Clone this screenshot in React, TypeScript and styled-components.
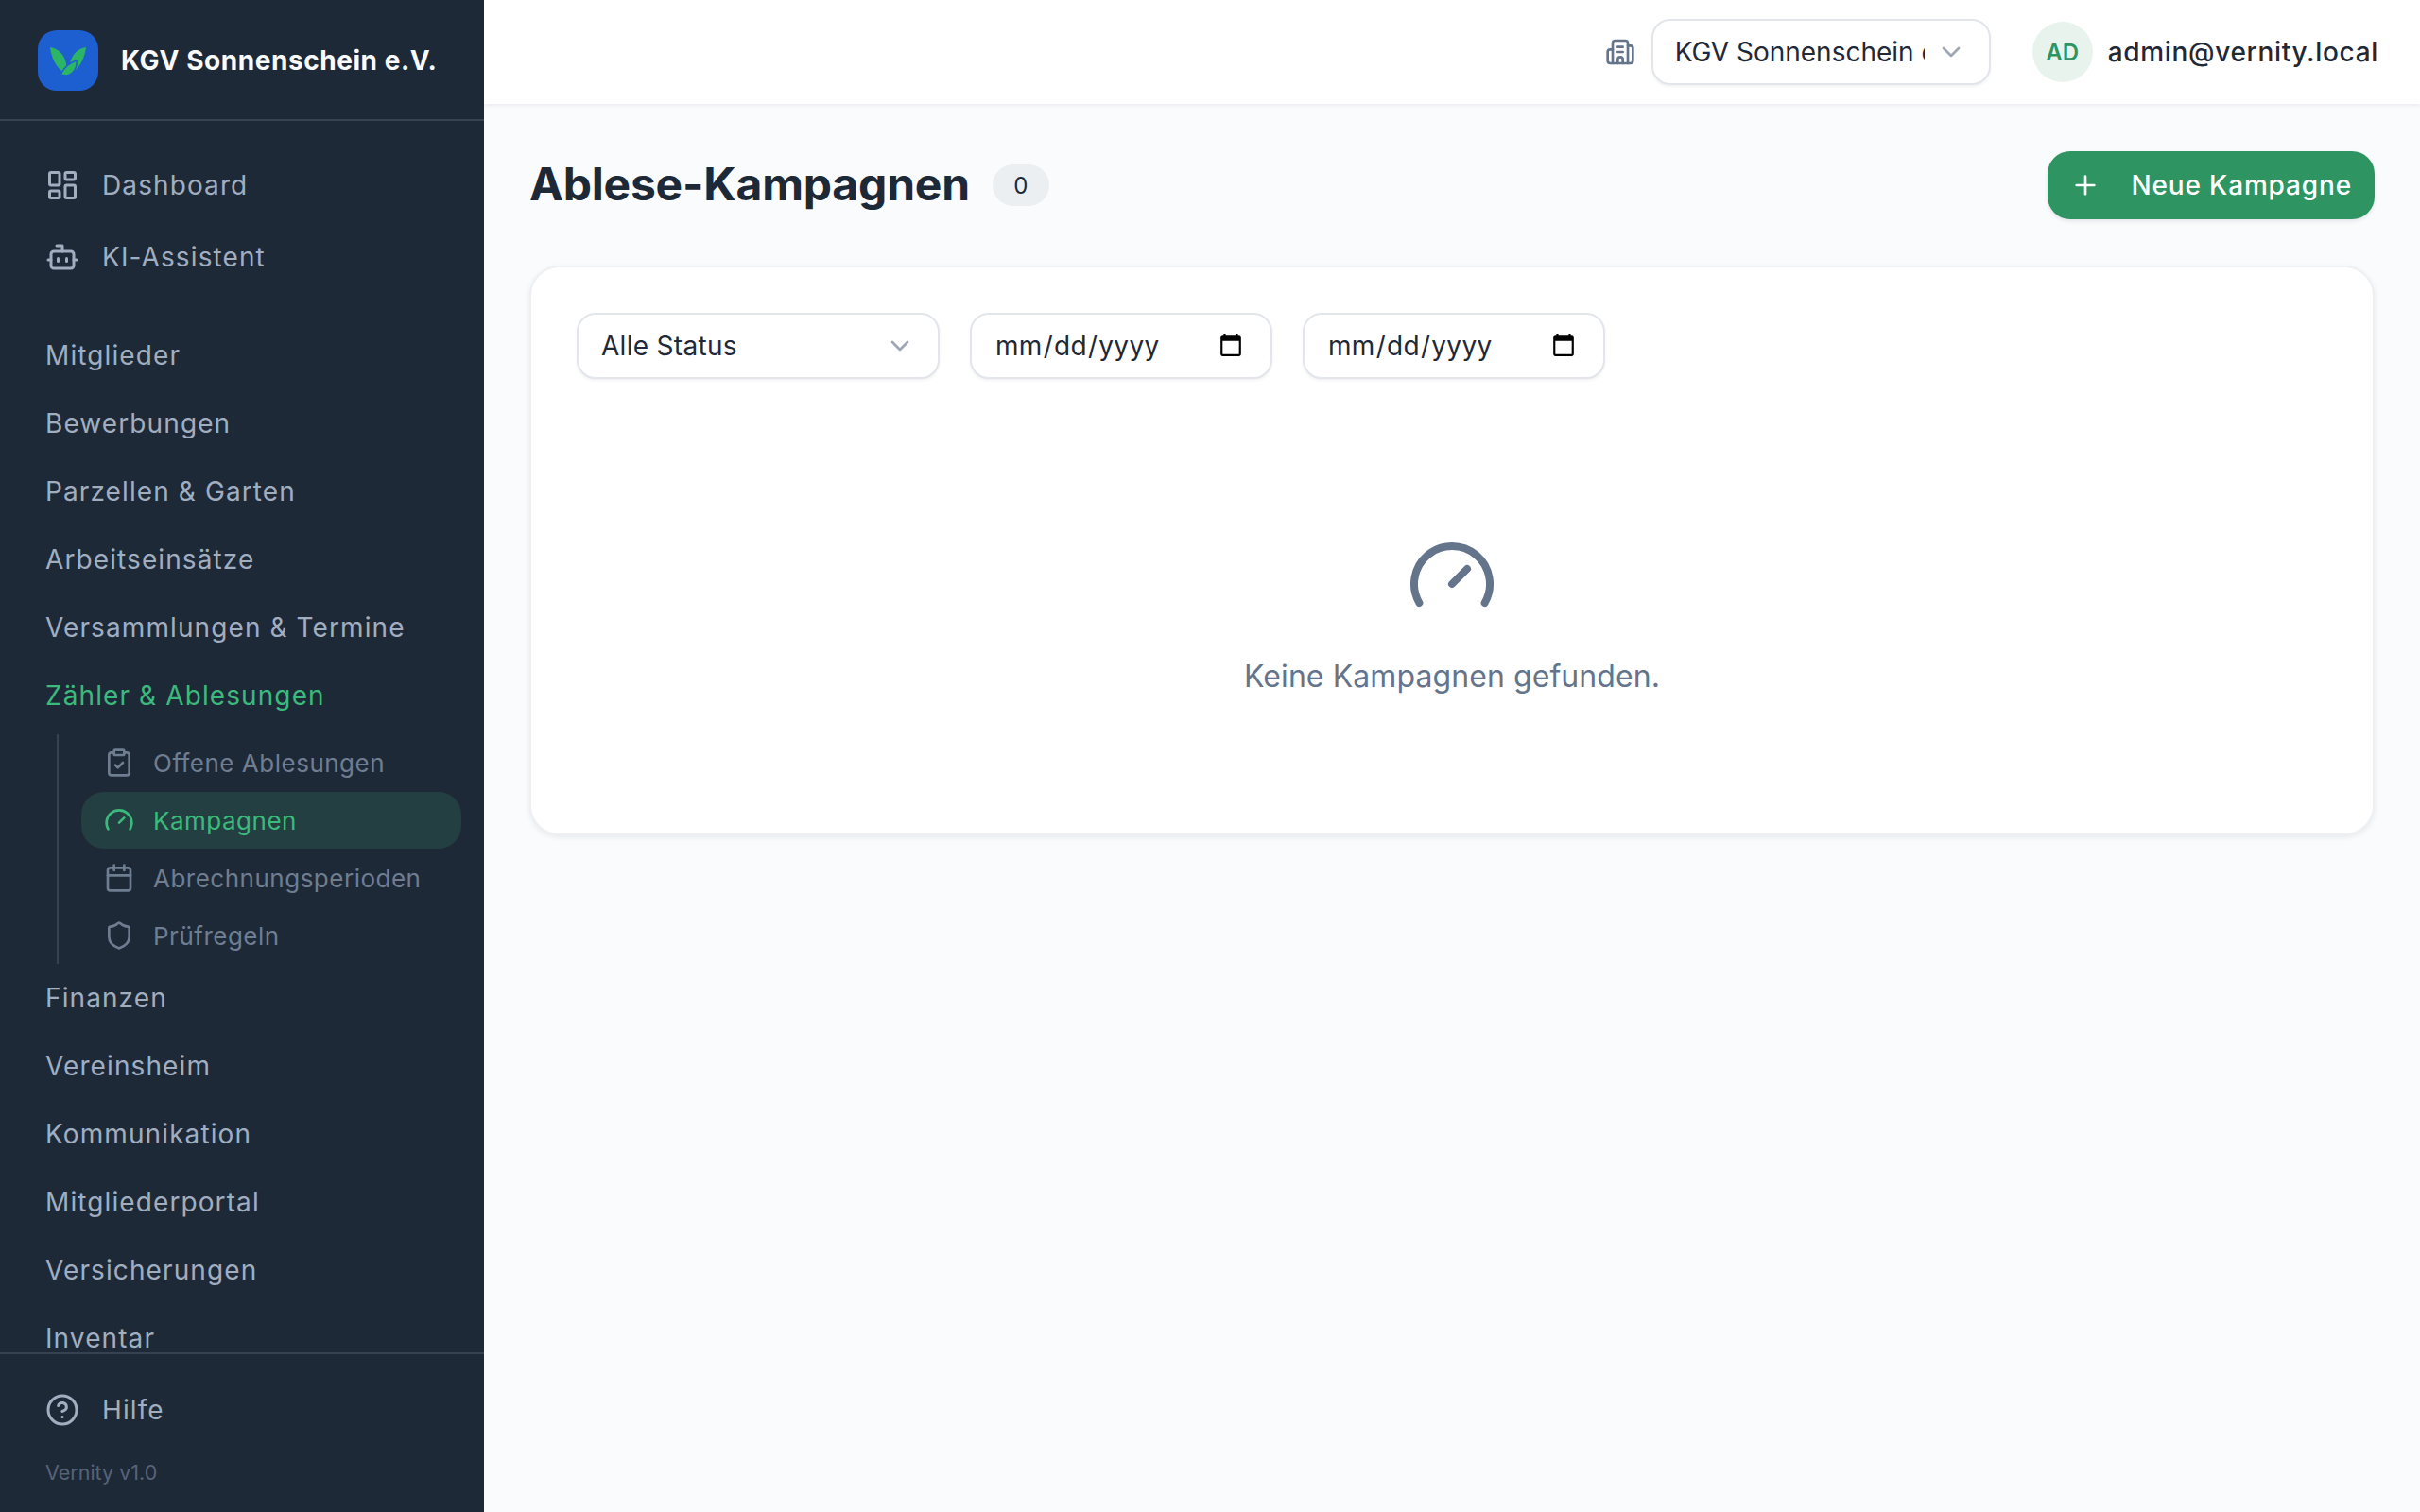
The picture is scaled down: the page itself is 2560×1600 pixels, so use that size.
import React from "react";
import styled, { createGlobalStyle } from "styled-components";
import {
  Bot,
  Building2,
  Calendar,
  ChevronDown,
  CircleHelp,
  ClipboardCheck,
  Gauge,
  LayoutDashboard,
  Plus,
  Shield,
} from "lucide-react";

const GlobalStyle = createGlobalStyle`
  html, body {
    margin: 0;
    padding: 0;
    height: 100%;
    background: #f9fbfd;
    font-family: Inter, "Liberation Sans", sans-serif;
  }
  * {
    box-sizing: border-box;
  }
`;

const Layout = styled.div`
  display: flex;
  width: 2560px;
  height: 1600px;
  overflow: hidden;
`;

const Sidebar = styled.aside`
  display: flex;
  flex-direction: column;
  flex: 0 0 512px;
  height: 100%;
  background: #1e2938;
`;

const Brand = styled.div`
  display: flex;
  align-items: center;
  gap: 24px;
  flex: 0 0 128px;
  padding: 2px 40px 0;
  border-bottom: 2px solid #364152;
`;

const LogoTile = styled.div`
  display: flex;
  align-items: center;
  justify-content: center;
  width: 64px;
  height: 64px;
  border-radius: 20px;
  background: #1d5fd0;
`;

const BrandName = styled.span`
  color: #f8fafc;
  font-size: 28px;
  font-weight: 700;
  letter-spacing: 0.55px;
  white-space: nowrap;
`;

const Nav = styled.nav`
  flex: 1;
  min-height: 0;
  overflow: hidden;
  padding-top: 30px;
`;

const TopLink = styled.a`
  display: flex;
  align-items: center;
  gap: 24px;
  height: 76px;
  padding-left: 48px;
  color: #a0aec0;
  font-size: 28px;
  font-weight: 400;
  letter-spacing: 1.1px;
`;

const PrimaryGroup = styled.div`
  margin-bottom: 30px;
`;

const SectionLink = styled.a<{ $active?: boolean }>`
  display: flex;
  align-items: center;
  height: 72px;
  padding-left: 48px;
  color: ${(props) => (props.$active ? "#3cb97c" : "#a0aec0")};
  font-size: 28px;
  font-weight: 400;
  letter-spacing: 1.1px;
`;

const SubList = styled.div`
  display: flex;
  flex-direction: column;
  gap: 1px;
  margin: 5px 24px 0 60px;
  padding-left: 24px;
  border-left: 2px solid #364152;
`;

const SubLink = styled.a<{ $active?: boolean }>`
  display: flex;
  align-items: center;
  gap: 20px;
  height: 60px;
  padding-left: 24px;
  border-radius: 24px;
  background: ${(props) => (props.$active ? "#243f42" : "transparent")};
  color: ${(props) => (props.$active ? "#3cb97c" : "#6f7d91")};
  font-size: 26px;
  font-weight: 400;
  letter-spacing: 0.5px;
`;

const SidebarFooter = styled.div`
  flex: 0 0 169px;
  padding: 21px 0 0;
  border-top: 2px solid #364152;
`;

const Version = styled.div`
  margin-top: 15px;
  padding-left: 48px;
  color: #566377;
  font-size: 21.5px;
`;

const Main = styled.div`
  display: flex;
  flex-direction: column;
  flex: 1;
  min-width: 0;
`;

const TopBar = styled.header`
  display: flex;
  align-items: center;
  justify-content: flex-end;
  flex: 0 0 110px;
  padding-right: 44px;
  background: #ffffff;
  box-shadow: 0 2px 4px rgba(15, 23, 42, 0.06);
`;

const TenantIcon = styled(Building2)`
  margin-right: 17px;
  color: #64748b;
`;

const SelectWrap = styled.div<{ $width: number }>`
  position: relative;
  width: ${(props) => props.$width}px;
  height: 70px;
`;

const Select = styled.select`
  appearance: none;
  width: 100%;
  height: 100%;
  padding: 0 72px 0 24px;
  border: 2px solid #e2e5ea;
  border-radius: 20px;
  background: #ffffff;
  box-shadow: 0 2px 3px rgba(15, 23, 42, 0.05);
  color: #1f2937;
  font-family: inherit;
  font-size: 28px;
  letter-spacing: 0.3px;
`;

const TenantSelect = styled(Select)`
  padding: 0 68px 0 23px;
  letter-spacing: 0;
`;

const SelectChevron = styled(ChevronDown)`
  position: absolute;
  top: 19px;
  right: 26px;
  color: #a0a7b4;
  pointer-events: none;
`;

const UserChip = styled.div`
  display: flex;
  align-items: center;
  gap: 16px;
  margin-left: 44px;
`;

const Avatar = styled.div`
  display: flex;
  align-items: center;
  justify-content: center;
  width: 64px;
  height: 64px;
  border-radius: 50%;
  background: #e8f3ee;
  color: #2d9462;
  font-size: 24px;
  font-weight: 600;
`;

const UserMail = styled.span`
  color: #1f2937;
  font-size: 28px;
  font-weight: 500;
  letter-spacing: 0.68px;
`;

const Content = styled.main`
  flex: 1;
  padding: 50px 48px 0;
`;

const PageHeader = styled.div`
  display: flex;
  align-items: center;
  justify-content: space-between;
  height: 72px;
  margin-bottom: 49px;
`;

const TitleRow = styled.div`
  display: flex;
  align-items: center;
  gap: 24px;
`;

const Title = styled.h1`
  margin: 0;
  padding-bottom: 2px;
  color: #1e2938;
  font-size: 48px;
  font-weight: 700;
  line-height: 70px;
  letter-spacing: -0.2px;
`;

const CountBadge = styled.span`
  display: flex;
  align-items: center;
  justify-content: center;
  width: 60px;
  height: 44px;
  border-radius: 22px;
  background: #ebeff2;
  color: #1f2937;
  font-size: 24px;
`;

const PrimaryButton = styled.button`
  display: flex;
  align-items: center;
  gap: 32px;
  height: 72px;
  padding: 0 24px;
  border: 0;
  border-radius: 24px;
  background: #2d9462;
  box-shadow: 0 2px 4px rgba(15, 23, 42, 0.1);
  color: #ffffff;
  font-family: inherit;
  font-size: 28px;
  font-weight: 500;
  letter-spacing: 0.85px;
`;

const Card = styled.section`
  height: 603px;
  padding: 48px;
  border: 2px solid #eef0f3;
  border-radius: 32px;
  background: #ffffff;
  box-shadow: 0 2px 6px rgba(15, 23, 42, 0.08);
`;

const Filters = styled.div`
  display: flex;
  gap: 32px;
`;

const DateInput = styled.input`
  width: 320px;
  height: 70px;
  padding: 0 26px 0 24px;
  border: 2px solid #e2e5ea;
  border-radius: 20px;
  background: #ffffff;
  box-shadow: 0 2px 3px rgba(15, 23, 42, 0.05);
  color: #1f2937;
  font-family: inherit;
  font-size: 28px;
  letter-spacing: 0.3px;
`;

const EmptyState = styled.div`
  display: flex;
  flex-direction: column;
  align-items: center;
  gap: 34px;
  padding-top: 161px;
  color: #64748b;
`;

const EmptyText = styled.p`
  margin: 0;
  font-size: 32px;
  line-height: 48px;
  letter-spacing: 0.08px;
`;

const LeafLogo = () => (
  <svg width="64" height="64" viewBox="0 0 64 64" fill="#2db566">
    <path d="M13 18 C24 20 31 28 31 46 C22 43 15 33 13 18Z" />
    <path d="M51 18 C40 20 33 28 33 46 C42 43 49 33 51 18Z" />
    <path d="M24 47 C28 38 35 34 41 32 C42 40 37 47 30 48 Z" stroke="#1d5fd0" strokeWidth="1.5" />
  </svg>
);

const sections = ["Mitglieder", "Bewerbungen", "Parzellen & Garten", "Arbeitseinsätze", "Versammlungen & Termine"];
const laterSections = ["Finanzen", "Vereinsheim", "Kommunikation", "Mitgliederportal", "Versicherungen", "Inventar"];

const App: React.FC = function () {
  return (
    <Layout>
      <GlobalStyle />
      <Sidebar>
        <Brand>
          <LogoTile>
            <LeafLogo />
          </LogoTile>
          <BrandName>KGV Sonnenschein e.V.</BrandName>
        </Brand>
        <Nav>
          <PrimaryGroup>
            <TopLink>
              <LayoutDashboard size={36} />
              Dashboard
            </TopLink>
            <TopLink>
              <Bot size={36} />
              KI-Assistent
            </TopLink>
          </PrimaryGroup>
          {sections.map((label) => (
            <SectionLink key={label}>{label}</SectionLink>
          ))}
          <SectionLink $active>Zähler &amp; Ablesungen</SectionLink>
          <SubList>
            <SubLink>
              <ClipboardCheck size={32} />
              Offene Ablesungen
            </SubLink>
            <SubLink $active>
              <Gauge size={32} />
              Kampagnen
            </SubLink>
            <SubLink>
              <Calendar size={32} />
              Abrechnungsperioden
            </SubLink>
            <SubLink>
              <Shield size={32} />
              Prüfregeln
            </SubLink>
          </SubList>
          {laterSections.map((label) => (
            <SectionLink key={label}>{label}</SectionLink>
          ))}
        </Nav>
        <SidebarFooter>
          <TopLink>
            <CircleHelp size={36} />
            Hilfe
          </TopLink>
          <Version>Vernity v1.0</Version>
        </SidebarFooter>
      </Sidebar>
      <Main>
        <TopBar>
          <TenantIcon size={32} />
          <SelectWrap $width={359}>
            <TenantSelect defaultValue="kgv">
              <option value="kgv">KGV Sonnenschein e.V.</option>
            </TenantSelect>
            <SelectChevron size={32} />
          </SelectWrap>
          <UserChip>
            <Avatar>AD</Avatar>
            <UserMail>admin@vernity.local</UserMail>
          </UserChip>
        </TopBar>
        <Content>
          <PageHeader>
            <TitleRow>
              <Title>Ablese-Kampagnen</Title>
              <CountBadge>0</CountBadge>
            </TitleRow>
            <PrimaryButton>
              <Plus size={32} />
              Neue Kampagne
            </PrimaryButton>
          </PageHeader>
          <Card>
            <Filters>
              <SelectWrap $width={384}>
                <Select defaultValue="all">
                  <option value="all">Alle Status</option>
                </Select>
                <SelectChevron size={32} />
              </SelectWrap>
              <DateInput type="date" />
              <DateInput type="date" />
            </Filters>
            <EmptyState>
              <Gauge size={96} />
              <EmptyText>Keine Kampagnen gefunden.</EmptyText>
            </EmptyState>
          </Card>
        </Content>
      </Main>
    </Layout>
  );
};

export default App;
